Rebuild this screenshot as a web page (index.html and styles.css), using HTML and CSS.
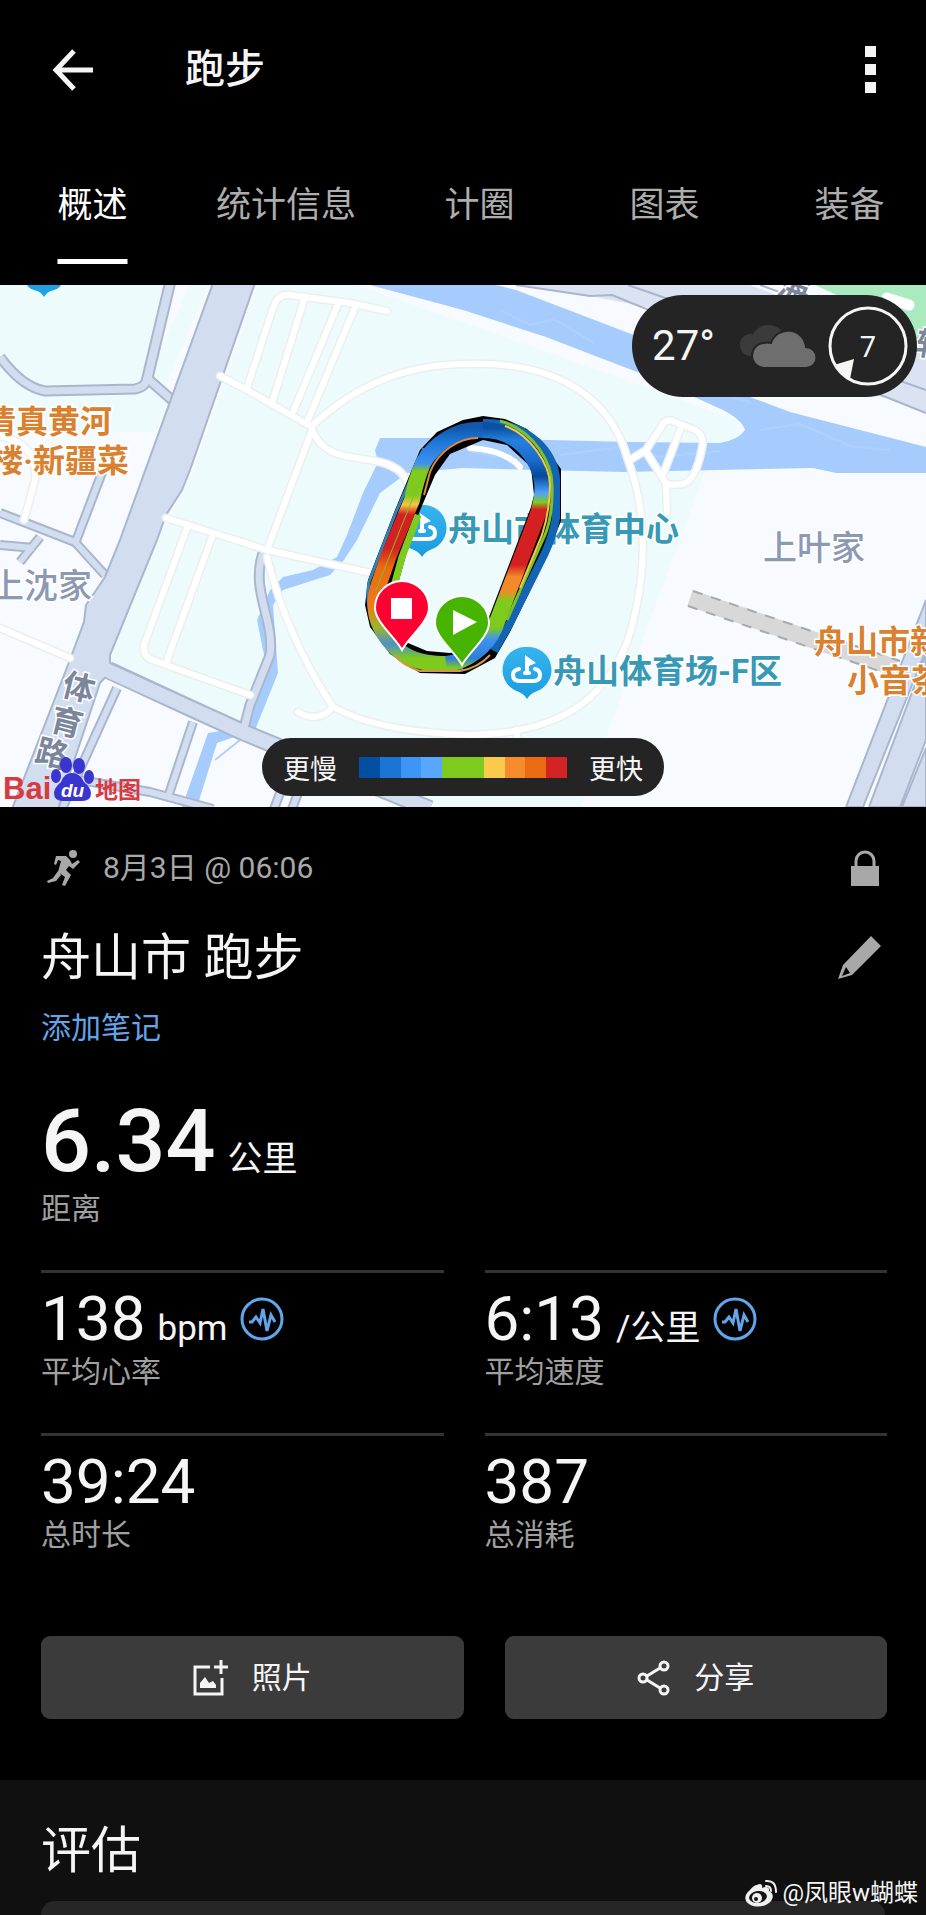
FILE: index.html
```html
<!DOCTYPE html>
<html lang="zh-CN">
<head>
  <meta charset="UTF-8">
  <meta name="viewport" content="width=device-width, initial-scale=1">
  <title>跑步</title>
  <link rel="stylesheet" href="styles.css">
</head>
<body>
  <!-- Top bar -->
  <header class="topbar">
    <button class="icon-button" aria-label="返回">
      <svg width="42" height="42" viewBox="0 0 42 42" fill="none" stroke="#f5f5f5" stroke-width="5"><path d="M41 21H4M22 2L4 21l18 19"/></svg>
    </button>
    <h1>跑步</h1>
    <button class="icon-button" aria-label="更多">
      <svg width="12" height="48" viewBox="0 0 12 48" fill="#f5f5f5"><path d="M0 0h11v11H0zM0 18h11v11H0zM0 36h11v11H0z"/></svg>
    </button>
  </header>

  <nav class="tabs">
    <button class="tab active">概述</button>
    <button class="tab">统计信息</button>
    <button class="tab">计圈</button>
    <button class="tab">图表</button>
    <button class="tab">装备</button>
  </nav>

  <!-- Route map -->
  <section class="map">
    <svg class="map-canvas" viewBox="0 285 926 522">
      <defs>
        <linearGradient id="paceLeft" gradientUnits="userSpaceOnUse" x1="0" y1="428" x2="0" y2="668">
          <stop offset="0" stop-color="#1259ac"/><stop offset=".05" stop-color="#1b74d4"/>
          <stop offset=".15" stop-color="#3f93f0"/><stop offset=".18" stop-color="#7ecb1d"/>
          <stop offset=".28" stop-color="#7ecb1d"/><stop offset=".32" stop-color="#f8c447"/>
          <stop offset=".36" stop-color="#d42020"/><stop offset=".5" stop-color="#d42020"/>
          <stop offset=".58" stop-color="#eb6a10"/><stop offset=".74" stop-color="#ee7a1c"/>
          <stop offset=".83" stop-color="#9db52a"/><stop offset=".9" stop-color="#4f90c8"/>
          <stop offset=".96" stop-color="#7ecb1d"/><stop offset="1" stop-color="#7ecb1d"/>
        </linearGradient>
        <linearGradient id="paceRight" gradientUnits="userSpaceOnUse" x1="0" y1="428" x2="0" y2="668">
          <stop offset="0" stop-color="#0b51a3"/><stop offset=".05" stop-color="#2480de"/>
          <stop offset=".13" stop-color="#1b6dcb"/><stop offset=".2" stop-color="#064a9b"/>
          <stop offset=".27" stop-color="#4fa0ff"/><stop offset=".31" stop-color="#7ecb1d"/>
          <stop offset=".34" stop-color="#d42020"/><stop offset=".57" stop-color="#d42020"/>
          <stop offset=".62" stop-color="#f28a2a"/><stop offset=".68" stop-color="#f28a2a"/>
          <stop offset=".72" stop-color="#7ecb1d"/><stop offset=".83" stop-color="#7ecb1d"/>
          <stop offset=".88" stop-color="#3f93f0"/><stop offset=".96" stop-color="#2f7fd6"/>
          <stop offset="1" stop-color="#7ecb1d"/>
        </linearGradient>
        <linearGradient id="poi" x1="0" y1="0" x2="0" y2="1">
          <stop offset="0" stop-color="#36b4ee"/><stop offset="1" stop-color="#1a9ce0"/>
        </linearGradient>
      </defs>

      <rect y="285" width="926" height="522" fill="#f7faff"/>

      <!-- Parks -->
      <g fill="#eefbfd">
        <path d="M0 285H162L143 372 172 400 155 432H0z"/>
        <path d="M190 285H208L165 388 150 375z"/>
        <path d="M258 285H355L463 322 640 385 735 420 745 440 705 472 580 807H440L260 730 116 668 112 655 157 540 190 480z"/>
      </g>
      <path d="M815 285H926V370L880 315z" fill="#a9eabf"/>

      <!-- River -->
      <path d="M370 285L463 310 546 337 650 377 723 410Q742 420 745 430 738 440 720 443L630 442 463 438 380 438 375 450 378 462 363 493 347 535 337 557 313 570 283 577 270 590 257 620 263 650 267 667 245 727 208 733 182 807H197L217 743 255 730 278 673 273 605 283 590 330 575 344 560 357 540 380 493 407 473 463 468 623 472 813 468 836 473H926V447L790 412 750 397 660 345 516 290 496 285z" fill="#a6ccfe"/>
      <g fill="none" stroke="#afd1ff" stroke-width="2">
        <path d="M500 310l30 15 24-6 40 24M640 360l40 10 30 22 40 10M560 455l60-8 40 10 60-6M760 430l40-6 50 22 40 4M470 452l40 6M240 740l-25 20"/>
      </g>

      <!-- Expressway, top right -->
      <path d="M516 285L596 297 660 310 886 397 926 413V350L750 285z" fill="#dbe3f3"/>
      <path d="M516 285L590 296 612 295 676 321 886 397 926 413M628 285L700 310 926 390M760 285L926 345" fill="none" stroke="#a9b5cc" stroke-width="2"/>
      <path d="M887 298l22 7" stroke="#fff" stroke-width="11" stroke-linecap="round"/>

      <!-- Grey streets -->
      <g fill="none" stroke-linejoin="round">
        <g stroke="#aab6cd">
          <path d="M170 283L147 380" stroke-width="12"/>
          <path d="M0 357Q22 387 45 391L135 389Q146 387 147 378L172 400" stroke-width="11"/>
          <path d="M0 513L75 542 105 575M76 541L103 470M40 537L20 562M0 545L34 548" stroke-width="10"/>
          <path d="M263 553C250 590 275 620 270 655L250 705 243 732" stroke-width="11"/>
          <path d="M117 688L62 809M193 722L168 797M80 780L150 792 213 809M280 793L274 809M298 793L292 809" stroke-width="10"/>
          <path d="M108 670L190 708 245 733 430 809" stroke-width="18"/>
        </g>
        <g stroke="#d3ddf0">
          <path d="M170 283L147 380" stroke-width="8"/>
          <path d="M0 357Q22 387 45 391L135 389Q146 387 147 378L172 400" stroke-width="7"/>
          <path d="M0 513L75 542 105 575M76 541L103 470M40 537L20 562M0 545L34 548" stroke-width="6"/>
          <path d="M263 553C250 590 275 620 270 655L250 705 243 732" stroke-width="7"/>
          <path d="M117 688L62 809M193 722L168 797M80 780L150 792 213 809M280 793L274 809M298 793L292 809" stroke-width="6"/>
        </g>
      </g>
      <path d="M213 283L120 540 105 577 86 605 84 622 66 670 12 809H58L100 683 110 672 110 655 157 540 166 515 182 490 190 470 255 283z" fill="#d3ddf0" stroke="#aab6cd" stroke-width="2"/>
      <path d="M100 667L190 708 245 733 430 809" fill="none" stroke="#d3ddf0" stroke-width="14"/>
      <path d="M926 600L846 807H863L926 650zM926 655L869 807H900L926 740zM926 748L902 807H926z" fill="#d3ddf0" stroke="#aab6cd" stroke-width="2"/>

      <!-- Footpaths -->
      <g fill="none" stroke-linecap="round" stroke-linejoin="round">
        <g stroke="#ebeff0" stroke-width="9">
          <path d="M220 376L247 390 312 427M247 388L273 308Q278 293 290 295L350 303 387 311M273 400L304 300M294 410L338 304M308 420L356 305"/>
          <path d="M312 426C350 390 400 365 463 364 560 360 612 400 628 460 650 520 646 580 628 640 605 700 560 733 470 735 410 733 365 725 333 707 300 657 280 610 267 557"/>
          <path d="M312 430L267 550M312 430C325 460 350 455 380 462 400 467 405 475 412 492M166 518L267 550 380 575M187 528L144 645Q142 657 155 661L250 695M212 537L166 663M298 712Q318 724 333 707"/>
          <path d="M630 460L646 450 663 424Q668 418 675 422L695 430Q705 436 702 448 696 480 683 484 670 486 666 483L646 452M680 430L664 472M666 484L667 512"/>
          <path d="M0 628L70 658M-4 436Q38 440 35 480L24 520M516 730L518 740"/>
        </g>
        <g stroke="#fff" stroke-width="6">
          <path d="M220 376L247 390 312 427M247 388L273 308Q278 293 290 295L350 303 387 311M273 400L304 300M294 410L338 304M308 420L356 305"/>
          <path d="M312 426C350 390 400 365 463 364 560 360 612 400 628 460 650 520 646 580 628 640 605 700 560 733 470 735 410 733 365 725 333 707 300 657 280 610 267 557"/>
          <path d="M312 430L267 550M312 430C325 460 350 455 380 462 400 467 405 475 412 492M166 518L267 550 380 575M187 528L144 645Q142 657 155 661L250 695M212 537L166 663M298 712Q318 724 333 707"/>
          <path d="M630 460L646 450 663 424Q668 418 675 422L695 430Q705 436 702 448 696 480 683 484 670 486 666 483L646 452M680 430L664 472M666 484L667 512"/>
          <path d="M0 628L70 658M-4 436Q38 440 35 480L24 520M516 730L518 740"/>
          <path d="M470 448Q505 450 520 467"/>
        </g>
      </g>

      <!-- Tunnel -->
      <path d="M690 598L896 668" stroke="#d8d8d8" stroke-width="17"/>
      <path d="M693 591L900 661M688 606L894 676" stroke="#a9a9a9" stroke-width="2" stroke-dasharray="10 9"/>

      <!-- Place markers -->
      <path d="M26 283h36q-2 6-11 8-4 1-7 6-3-5-7-6-9-2-11-8z" fill="#1fa2e4"/>
      <g>
        <path d="M422 505a23 23 0 0 1 8 45q-5 2-8 7-3-5-8-7a23 23 0 0 1 8-45z" fill="url(#poi)"/>
        <path d="M420 532v-19l11 8-7 3v8z" fill="#fff"/>
        <path d="M414 527q-6 1-6 6 0 6 7 6h13q7 0 7-6 0-5-5-6M420 531h4" fill="none" stroke="#fff" stroke-width="4" stroke-linecap="round"/>
      </g>
      <g>
        <path d="M527 647a23 23 0 0 1 8 45q-5 2-8 7-3-5-8-7a23 23 0 0 1 8-45z" fill="url(#poi)"/>
        <path d="M525 674v-19l11 8-7 3v8z" fill="#fff"/>
        <path d="M519 669q-6 1-6 6 0 6 7 6h13q7 0 7-6 0-5-5-6M525 673h4" fill="none" stroke="#fff" stroke-width="4" stroke-linecap="round"/>
      </g>

      <g class="map-text">
        <g class="place-orange">
          <text x="112" y="433" text-anchor="end">清真黄河</text>
          <text x="129" y="472" text-anchor="end">楼·新疆菜</text>
          <text x="814" y="653">舟山市新</text>
          <text x="847" y="692">小音茶</text>
        </g>
        <g class="place-teal">
          <text x="448" y="541">舟山市体育中心</text>
          <text x="553" y="683">舟山体育场-F区</text>
        </g>
        <g class="place-grey">
          <text x="763" y="560">上叶家</text>
          <text x="-10" y="598">上沈家</text>
        </g>
        <g class="road-name">
          <text x="63" y="699" transform="rotate(14 79 687)">体</text>
          <text x="51" y="734" transform="rotate(14 67 722)">育</text>
          <text x="36" y="765" transform="rotate(14 52 753)">路</text>
          <text x="777" y="300" transform="rotate(20 790 290)">海</text>
          <text x="916" y="356" transform="rotate(10 930 345)">辅</text>
        </g>
      </g>

      <!-- Recorded laps, coloured by pace -->
      <g fill="none" stroke-linejoin="round">
        <path fill="#000" fill-rule="evenodd" d="M483 416L505 419 527 429 545 447 561 469 561 521 545 560 510 632 495 658 465 674 420 673 390 654 370 627 365 605 368 580 395 510 420 450 437 432 463 420z
          M483 440L450 454 435 475 416 520 397 587 398 625 408 643 427 651 450 653 476 645 489 617 531 507 534 495 531 467 507 445z"/>
        <path d="M483 423C530 422 556 455 556 480V518Q553 535 545 553L509 625 494 651" stroke="#1464b4" stroke-width="8"/>
        <path d="M424 448L396 512 369 582C364 610 375 632 392 651Q404 664 425 669H463" stroke="#3480b0" stroke-width="3"/>
        <path d="M418 515L402 557 393 590" stroke="#7ecb1d" stroke-width="7"/>
        <path d="M484 430C455 428 434 445 423 463Q416 480 412 500L389 555 379 584C370 610 379 632 398 650 412 662 430 664 448 664" stroke="url(#paceLeft)" stroke-width="16"/>
        <path d="M483 430C525 430 546 470 542 495Q541 507 535 522L495 627C486 648 466 662 446 664" stroke="url(#paceRight)" stroke-width="16"/>
        <path d="M500 421C535 430 552 465 552 485Q553 515 545 535L507 620" stroke="#7cc32a" stroke-width="3"/>
        <path d="M505 426C530 434 550 465 550 485Q550 510 542 535L520 588" stroke="#f0c84a" stroke-width="2"/>
        <path d="M478 438C458 438 438 452 430 472L424 495" stroke="#e08a44" stroke-width="2"/>
        <path d="M420 480L376 590" stroke="#7cc32a" stroke-width="1"/>
        <path d="M490 655Q478 668 460 671H420Q404 666 394 655" stroke="#d8924a" stroke-width="2"/>
      </g>

      <!-- Finish and start pins -->
      <g stroke="#fff" stroke-width="2">
        <path d="M402 650C396 638 375 622 375 608a27 27 0 0 1 54 0C429 622 408 638 402 650z" fill="#ff0033"/>
        <path d="M462 665C456 653 435 637 435 623a27 27 0 0 1 54 0C489 637 468 653 462 665z" fill="#46b400"/>
      </g>
      <path d="M391 598h21v21h-21zM453 610l24 12-24 13z" fill="#fff"/>

      <!-- Map provider -->
      <g class="provider">
        <text x="3" y="799" fill="#d93a3f" font-size="31">Bai</text>
        <g fill="#3a35d0">
          <ellipse cx="66" cy="765" rx="6" ry="8"/><ellipse cx="79" cy="766" rx="6" ry="8"/>
          <ellipse cx="56" cy="776" rx="5" ry="7"/><ellipse cx="89" cy="777" rx="5" ry="7"/>
          <path d="M72 773q8 0 12 9 7 6 7 11 0 8-9 8H63q-9 0-9-8 0-5 7-11 3-9 11-9z"/>
        </g>
        <text x="61" y="797" fill="#fff" font-size="19" font-style="italic">du</text>
        <text x="95" y="798" fill="#d93a3f" font-size="23">地图</text>
      </g>
    </svg>

    <div class="weather">
      <span>27°</span>
      <svg width="80" height="46" viewBox="0 0 80 46">
        <path d="M12 33A11 11 0 0 1 16 11A18 18 0 0 1 44 7L36 33z" fill="#3b3b3b"/>
        <path d="M28 45a12 12 0 0 1-1-25q3-1 7 0A18 18 0 0 1 69 24a10 10 0 0 1 0 21z" fill="#6e6e6e" stroke="#242424" stroke-width="2"/>
      </svg>
      <svg width="80" height="80" viewBox="0 0 80 80">
        <circle cx="40" cy="40" r="38" fill="none" stroke="#f5f5f5" stroke-width="3"/>
        <path d="M6 59L26 53 22 73Q12 68 6 59z" fill="#f5f5f5"/>
        <text class="wind" x="40" y="51" text-anchor="middle">7</text>
      </svg>
    </div>

    <div class="legend">
      <span>更慢</span>
      <div class="legend-bar">
        <i class="p1"></i><i class="p2"></i><i class="p3"></i><i class="p4"></i><i class="p5"></i>
        <i class="p5"></i><i class="p6"></i><i class="p7"></i><i class="p8"></i><i class="p9"></i>
      </div>
      <span>更快</span>
    </div>
  </section>

  <!-- Activity summary -->
  <main class="summary">
    <div class="meta">
      <svg width="34" height="36" viewBox="0 0 34 36">
        <circle cx="26" cy="4" r="4" fill="#a8a8a8"/>
        <path d="M9 6L19 6 23 10 25 14 31 10 33 12 26 19 22 16 19 20 24 25 18 36 15 35 18 27 11 22 14 11 11 10 9 15 7 14zM11 21L14 25 9 31 1 33 0 31 6 28z" fill="#a8a8a8"/>
      </svg>
      <span>8月3日 @ 06:06</span>
      <svg class="push" width="28" height="36" viewBox="0 0 28 36">
        <path d="M0 16h28v20H0z" fill="#a8a8a8"/>
        <path d="M5 17V11a9 9 0 0 1 18 0v6" fill="none" stroke="#a8a8a8" stroke-width="3"/>
      </svg>
    </div>

    <div class="title-row">
      <h2>舟山市 跑步</h2>
      <button class="icon-button" aria-label="编辑">
        <svg width="44" height="44" viewBox="0 0 44 44" fill="#a8a8a8"><path fill-rule="evenodd" d="M33 0L43 10 14 39 0 43 5 29zM8 31L4 40 12 37z"/></svg>
      </button>
    </div>
    <a class="note" href="#">添加笔记</a>

    <div class="distance">
      <p class="value large">6.34 <small>公里</small></p>
      <p class="label">距离</p>
    </div>

    <div class="metrics">
      <div class="metric">
        <p class="value">138 <small>bpm</small>
          <svg width="44" height="44" viewBox="0 0 44 44" fill="none" stroke="#62a5ea" stroke-width="3"><circle cx="22" cy="22" r="20"/><path d="M9 25h3l4-5 4 6 3-14 4 22 4-16 4 7"/></svg>
        </p>
        <p class="label">平均心率</p>
      </div>
      <div class="metric">
        <p class="value">6:13 <small>/公里</small>
          <svg width="44" height="44" viewBox="0 0 44 44" fill="none" stroke="#62a5ea" stroke-width="3"><circle cx="22" cy="22" r="20"/><path d="M9 25h3l4-5 4 6 3-14 4 22 4-16 4 7"/></svg>
        </p>
        <p class="label">平均速度</p>
      </div>
      <div class="metric">
        <p class="value">39:24</p>
        <p class="label">总时长</p>
      </div>
      <div class="metric">
        <p class="value">387</p>
        <p class="label">总消耗</p>
      </div>
    </div>

    <div class="actions">
      <button class="action">
        <svg width="36" height="36" viewBox="0 0 36 36" fill="none" stroke="#f5f5f5" stroke-width="3"><path d="M17 7H2v27h27V18M28 0v14M21 7h14"/><path d="M7 28V23l5-6 4 6 4-2 3 4v3z" fill="#f5f5f5" stroke="none"/></svg>
        照片
      </button>
      <button class="action">
        <svg width="34" height="36" viewBox="0 0 34 36" fill="none" stroke="#f5f5f5" stroke-width="3"><circle cx="6" cy="18" r="4"/><circle cx="27" cy="6" r="4"/><circle cx="27" cy="30" r="4"/><path d="M10 16L23 8M10 20L23 28"/></svg>
        分享
      </button>
    </div>
  </main>

  <!-- Evaluation -->
  <section class="evaluation">
    <h2>评估</h2>
    <div class="card"></div>
  </section>

  <div class="watermark">
    <svg width="33" height="28" viewBox="0 0 33 28">
      <path d="M12 6c3-2 6-1 5 3 4-2 8-1 7 3 5 2 5 8 0 12-5 4-14 5-20 1C-2 21 0 15 5 11 7 8 10 6 12 6z" fill="#f0f0f0"/>
      <ellipse cx="13" cy="18" rx="9" ry="6" fill="#151515" transform="rotate(-8 13 18)"/>
      <circle cx="12" cy="19" r="5" fill="#f0f0f0"/><circle cx="11" cy="20" r="2" fill="#151515"/>
      <path d="M21 2q10-1 10 11M21 7q5 0 5 5" fill="none" stroke="#f0f0f0" stroke-width="2" stroke-linecap="round"/>
    </svg>
    <span>@凤眼w蝴蝶</span>
  </div>
</body>
</html>
```
FILE: styles.css
```css
* {
  box-sizing: border-box;
}
body {
  margin: 0;
  min-height: 100vh;
  display: flex;
  flex-direction: column;
  position: relative;
  background: #000;
  color: #f5f5f5;
  font-family: Roboto, "Noto Sans CJK SC", sans-serif;
  line-height: 1.2;
}
h1, h2, p {
  margin: 0;
  font-weight: 400;
}
button {
  background: none;
  border: 0;
  padding: 0;
  color: inherit;
  font-family: inherit;
  line-height: inherit;
  cursor: pointer;
}
svg {
  display: block;
  flex: none;
}

/* Top bar */
.topbar {
  display: flex;
  align-items: center;
  height: 140px;
  padding: 0 49px 0 52px;
}
.topbar h1 {
  flex: 1;
  margin-left: 91px;
  font-size: 40px;
  font-weight: 500;
}
.tabs {
  display: flex;
  height: 145px;
  overflow: hidden;
}
.tab {
  flex: none;
  min-width: 185px;
  padding: 0 31px 14px;
  font-size: 35px;
  line-height: 120px;
  color: #adadad;
}
.tab.active {
  color: #fff;
  text-decoration: underline;
  text-decoration-thickness: 5px;
  text-underline-offset: 42px;
}

/* Map */
.map {
  position: relative;
  overflow: hidden;
}
.map-canvas {
  width: 100%;
  height: auto;
}
.map-text {
  font-weight: 700;
  font-size: 32px;
  stroke: #fff;
  stroke-width: 3px;
  paint-order: stroke;
}
.place-orange { fill: #d9812f; }
.place-teal { fill: #3799b5; font-size: 33px; }
.place-grey { fill: #8d99b3; font-size: 34px; font-weight: 500; }
.road-name { fill: #7b869d; }
.provider {
  font-family: "Liberation Sans", "Noto Sans CJK SC", sans-serif;
  font-weight: 700;
}
.weather {
  position: absolute;
  top: 10px;
  right: 9px;
  display: flex;
  align-items: center;
  gap: 11px;
  height: 102px;
  padding: 0 9px 0 20px;
  border-radius: 51px;
  background: #242424;
  font-size: 42px;
}
.weather span {
  margin-right: 11px;
}
.wind {
  font-size: 29px;
  fill: #f5f5f5;
}
.legend {
  position: absolute;
  bottom: 11px;
  left: 50%;
  transform: translateX(-50%);
  display: flex;
  align-items: center;
  gap: 22px;
  height: 58px;
  padding: 0 21px;
  border-radius: 29px;
  background: #242424;
  font-size: 27px;
  line-height: normal;
  white-space: nowrap;
}
.legend-bar {
  display: flex;
  width: 208px;
  height: 21px;
}
.legend-bar i { flex: 1; }
.p1 { background: #004fa3; }
.p2 { background: #1b74d2; }
.p3 { background: #3f95f4; }
.p4 { background: #58a7ff; }
.p5 { background: #7ecb1d; }
.p6 { background: #f9ca4b; }
.p7 { background: #f68b2c; }
.p8 { background: #eb6a12; }
.p9 { background: #d32323; }

/* Summary */
.summary {
  padding: 40px 39px 61px 41px;
}
.meta {
  display: flex;
  align-items: center;
  gap: 22px;
  height: 42px;
  padding: 0 8px 0 6px;
  font-size: 30px;
  color: #a8a8a8;
}
.push {
  margin-left: auto;
}
.title-row {
  display: flex;
  justify-content: space-between;
  align-items: center;
  height: 60px;
  margin-top: 39px;
  padding-right: 5px;
}
h2 {
  font-size: 50px;
  line-height: 64px;
}
.note {
  display: block;
  width: max-content;
  margin: 20px 0 49px;
  font-size: 30px;
  line-height: 40px;
  color: #62a5ea;
  text-decoration: none;
}
.value {
  display: flex;
  align-items: baseline;
  gap: 12px;
  font-size: 62px;
  line-height: 62px;
}
.value small {
  font-size: 35px;
  line-height: 35px;
}
.value svg {
  align-self: center;
}
.value.large {
  font-size: 88px;
  line-height: 88px;
  font-weight: 500;
}
.large small {
  font-weight: 400;
}
.label {
  margin-top: 2px;
  font-size: 30px;
  line-height: 40px;
  color: #a0a0a0;
}
.distance .label {
  margin-top: 4px;
}
.metrics {
  display: grid;
  grid-template-columns: 1fr 1fr;
  gap: 41px;
  margin-top: 41px;
}
.metric {
  border-top: 3px solid #333;
  padding-top: 15px;
}
.actions {
  display: grid;
  grid-template-columns: 21fr 19fr;
  gap: 41px;
  margin-top: 81px;
}
.action {
  display: flex;
  justify-content: center;
  align-items: center;
  gap: 23px;
  height: 83px;
  border-radius: 9px;
  background: #3b3b3b;
  font-size: 30px;
}

/* Evaluation */
.evaluation {
  flex: 1;
  display: flex;
  flex-direction: column;
  padding: 39px 41px 0;
  background: #101010;
}
.card {
  flex: 1;
  margin-top: 18px;
  border-radius: 22px 22px 0 0;
  background: #262626;
}
.watermark {
  position: absolute;
  right: 8px;
  bottom: 6px;
  display: flex;
  align-items: center;
  gap: 4px;
  font-size: 24px;
  line-height: 32px;
}
```
